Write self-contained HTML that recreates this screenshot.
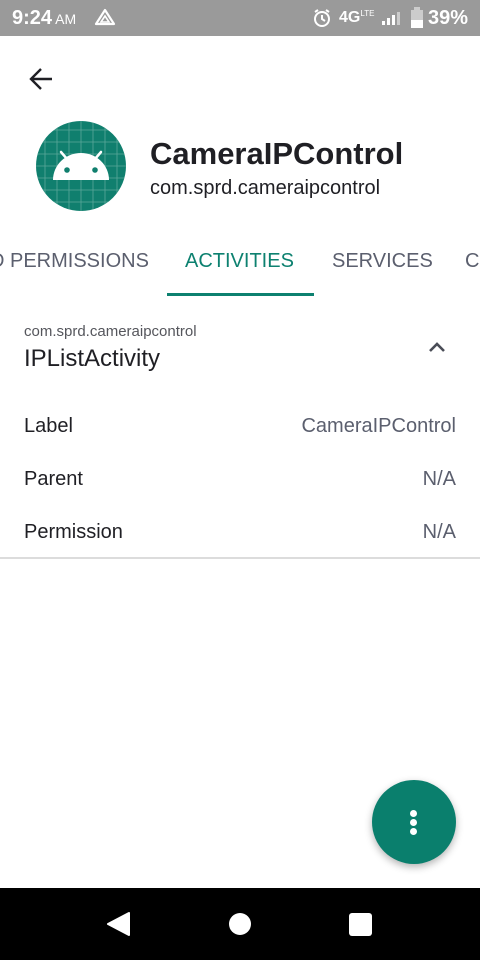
<!DOCTYPE html>
<html><head><style>
*{margin:0;padding:0;box-sizing:border-box}
body{width:480px;height:960px;position:relative;overflow:hidden;background:#fff;font-family:"Liberation Sans",sans-serif;color:#1f1f24}
.a{position:absolute;white-space:nowrap}
</style></head><body>
<div class="a" style="left:0;top:0;width:480px;height:36px;background:#9a9a9a"></div>
<div class="a" style="left:12px;top:7px;font-size:20px;color:#fff;font-weight:bold">9:24<span style="font-size:14px;font-weight:normal"> AM</span></div>
<svg class="a" style="left:94px;top:8px" width="22" height="20" viewBox="0 0 22 20"><path d="M11 2 L20 16 H2 Z" fill="none" stroke="#fff" stroke-width="2.2" stroke-linejoin="round"/><path d="M11 8 L15 14 H7 Z" fill="none" stroke="#fff" stroke-width="1.6"/></svg>
<svg class="a" style="left:312px;top:8px" width="20" height="20" viewBox="0 0 20 20"><circle cx="10" cy="11" r="7" fill="none" stroke="#fff" stroke-width="2"/><path d="M10 7v4l3 2M3 4l3-2M17 4l-3-2" stroke="#fff" stroke-width="2" fill="none"/></svg>
<div class="a" style="left:339px;top:9px;font-size:16px;color:#fff;font-weight:bold">4G<span style="font-size:8px;vertical-align:top;font-weight:normal">LTE</span></div>
<svg class="a" style="left:380px;top:10px" width="24" height="16"><rect x="2" y="11" width="3" height="4" fill="#fff"/><rect x="7" y="8" width="3" height="7" fill="#fff"/><rect x="12" y="5" width="3" height="10" fill="#fff"/><rect x="17" y="2" width="3" height="13" fill="#ccc"/></svg>
<svg class="a" style="left:410px;top:7px" width="14" height="22"><rect x="1" y="3" width="12" height="18" fill="#ccc"/><rect x="4" y="0" width="6" height="3" fill="#ccc"/><rect x="1" y="13" width="12" height="8" fill="#fff"/></svg>
<div class="a" style="left:428px;top:7px;font-size:20px;color:#fff;font-weight:bold">39%</div>

<svg class="a" style="left:28px;top:66px" width="26" height="26" viewBox="0 0 26 26"><path d="M24 13H4M13 3L3 13l10 10" fill="none" stroke="#1f1f24" stroke-width="2.4"/></svg>

<svg class="a" style="left:36px;top:121px" width="90" height="90" viewBox="0 0 90 90">
<defs><clipPath id="c"><circle cx="45" cy="45" r="45"/></clipPath></defs>
<circle cx="45" cy="45" r="45" fill="#107f6e"/>
<g clip-path="url(#c)" stroke="#5aa89a" stroke-width="0.8">
<path d="M9 0V90M21 0V90M33 0V90M45 0V90M57 0V90M69 0V90M81 0V90M0 9H90M0 21H90M0 33H90M0 45H90M0 57H90M0 69H90M0 81H90"/></g>
<path d="M17 59a28 27 0 0 1 56 0Z" fill="#fff"/>
<path d="M31 38l-6-7M59 38l6-7" stroke="#fff" stroke-width="2.5" stroke-linecap="round"/>
<circle cx="31" cy="49" r="2.8" fill="#107f6e"/><circle cx="59" cy="49" r="2.8" fill="#107f6e"/>
</svg>

<div class="a" style="left:150px;top:136px;font-size:31px;font-weight:bold;color:#1f1f24">CameraIPControl</div>
<div class="a" style="left:150px;top:177px;font-size:20px;color:#1f1f24">com.sprd.cameraipcontrol</div>

<div class="a" style="left:-10px;top:250px;font-size:20px;color:#5b5f6e">D PERMISSIONS</div>
<div class="a" style="left:185px;top:250px;font-size:20px;color:#0d8170">ACTIVITIES</div>
<div class="a" style="left:332px;top:250px;font-size:20px;color:#5b5f6e">SERVICES</div>
<div class="a" style="left:465px;top:250px;font-size:20px;color:#5b5f6e">C</div>
<div class="a" style="left:167px;top:293px;width:147px;height:3px;background:#0d8170"></div>

<div class="a" style="left:24px;top:323px;font-size:15px;color:#55565c">com.sprd.cameraipcontrol</div>
<div class="a" style="left:24px;top:345px;font-size:24px;color:#1f1f24">IPListActivity</div>
<svg class="a" style="left:427px;top:340px" width="20" height="14"><path d="M3 11L10 4l7 7" fill="none" stroke="#4a4d57" stroke-width="2.6"/></svg>

<div class="a" style="left:24px;top:415px;font-size:20px">Label</div>
<div class="a" style="right:24px;top:415px;font-size:20px;color:#5b5f6e">CameraIPControl</div>
<div class="a" style="left:24px;top:468px;font-size:20px">Parent</div>
<div class="a" style="right:24px;top:468px;font-size:20px;color:#5b5f6e">N/A</div>
<div class="a" style="left:24px;top:521px;font-size:20px">Permission</div>
<div class="a" style="right:24px;top:521px;font-size:20px;color:#5b5f6e">N/A</div>
<div class="a" style="left:0;top:557px;width:480px;height:2px;background:#dcdcdc"></div>

<div class="a" style="left:372px;top:780px;width:84px;height:84px;border-radius:50%;background:#0a7f6d;box-shadow:0 3px 8px rgba(0,0,0,.3)"></div>
<div class="a" style="left:410px;top:810px;width:7px;height:7px;border-radius:50%;background:#fff"></div>
<div class="a" style="left:410px;top:819px;width:7px;height:7px;border-radius:50%;background:#fff"></div>
<div class="a" style="left:410px;top:828px;width:7px;height:7px;border-radius:50%;background:#fff"></div>

<div class="a" style="left:0;top:888px;width:480px;height:72px;background:#000"></div>
<svg class="a" style="left:106px;top:911px" width="26" height="26"><path d="M23 2V24L2 13Z" fill="#fff" stroke="#fff" stroke-linejoin="round" stroke-width="2"/></svg>
<div class="a" style="left:229px;top:913px;width:22px;height:22px;border-radius:50%;background:#fff"></div>
<div class="a" style="left:349px;top:913px;width:23px;height:23px;border-radius:3px;background:#fff"></div>
</body></html>
